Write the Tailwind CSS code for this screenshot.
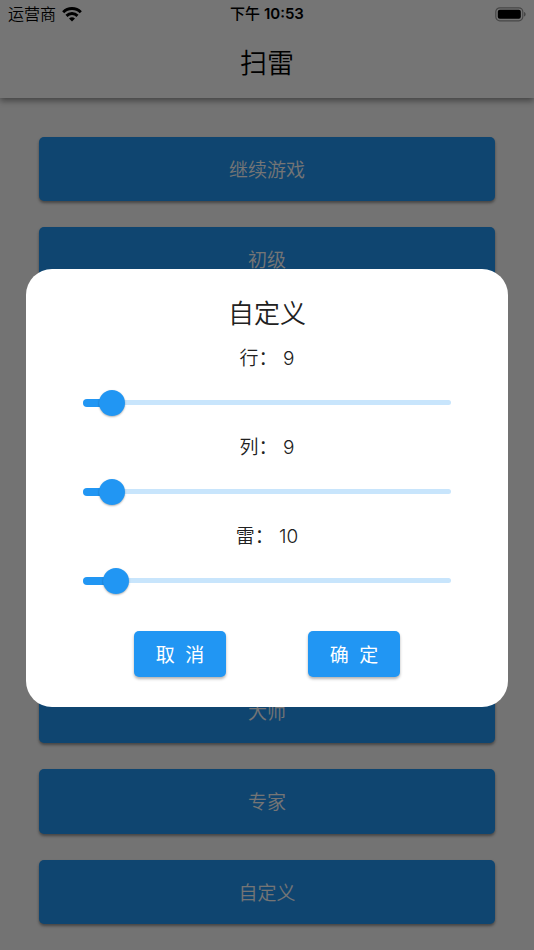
<!DOCTYPE html>
<html lang="zh-CN">
<head>
  <meta charset="UTF-8" />
  <meta name="viewport" content="width=device-width, initial-scale=1.0" />
  <title>扫雷</title>
  <script src="https://cdn.jsdelivr.net/npm/@tailwindcss/browser@4"></script>
  <style>
    body {
      font-family: Inter, "Noto Sans CJK SC", sans-serif;
    }
    input[type="range"]::-webkit-slider-thumb {
      appearance: none;
      width: 26px;
      height: 26px;
      border-radius: 50%;
      background: #2196f3;
      box-shadow: 0 1px 2px rgba(0, 0, 0, 0.3);
    }
  </style>
</head>
<body class="bg-[#fafafa] text-black">
  <div class="flex flex-col h-screen">

    <!-- Header -->
    <header class="bg-white shadow-[0_3px_6px_rgba(0,0,0,0.4)]">
      <div class="grid grid-cols-3 items-center h-7 px-2 text-[15px]">
        <div class="flex items-center gap-1.5">
          <span class="text-base font-[350]">运营商</span>
          <svg class="w-5 h-[15px]" viewBox="0 0 20 15" fill="none" stroke="#000" stroke-width="3">
            <path d="M1.2 5.2a12.6 12.6 0 0 1 17.6 0" />
            <path d="M4.5 8.8a7.9 7.9 0 0 1 11 0" />
            <path d="M10 14.6 7 11.6a4.3 4.3 0 0 1 6 0z" fill="#000" stroke="none" />
          </svg>
        </div>
        <div class="text-center font-semibold"><span class="font-medium">下午</span> 10:53</div>
        <svg class="w-[31px] h-[15px] justify-self-end" viewBox="0 0 31 15">
          <rect x="0.8" y="0.8" width="27" height="13" rx="4" fill="none" stroke="#000" stroke-opacity="0.4" stroke-width="1.2" />
          <rect x="2.8" y="2.8" width="23" height="9" rx="2" fill="#000" />
          <path d="M29.2 5v4.6c1.8-.7 1.8-3.900 0-4.600z" fill="#000" fill-opacity="0.5" />
        </svg>
      </div>
      <h1 class="flex items-center justify-center h-[70px] pt-0.5 text-[27px] font-[350]">扫雷</h1>
    </header>

    <!-- Menu -->
    <main class="flex flex-1 flex-col gap-[26px] px-[39px] pt-[39px] pb-[26px] text-[19px] font-[350] text-white">
      <button class="flex-1 pt-1 rounded-[5px] bg-[#2196f3] shadow-[0_2px_3px_rgba(0,0,0,0.4)]">继续游戏</button>
      <button class="flex-1 pt-1 rounded-[5px] bg-[#2196f3] shadow-[0_2px_3px_rgba(0,0,0,0.4)]">初级</button>
      <button class="flex-1 pt-1 rounded-[5px] bg-[#2196f3] shadow-[0_2px_3px_rgba(0,0,0,0.4)]"></button>
      <button class="flex-1 pt-1 rounded-[5px] bg-[#2196f3] shadow-[0_2px_3px_rgba(0,0,0,0.4)]"></button>
      <button class="flex-1 pt-1 rounded-[5px] bg-[#2196f3] shadow-[0_2px_3px_rgba(0,0,0,0.4)]"></button>
      <button class="flex-1 pt-1 rounded-[5px] bg-[#2196f3] shadow-[0_2px_3px_rgba(0,0,0,0.4)]"></button>
      <button class="flex-1 pt-1 rounded-[5px] bg-[#2196f3] shadow-[0_2px_3px_rgba(0,0,0,0.4)]">大师</button>
      <button class="flex-1 pt-1 rounded-[5px] bg-[#2196f3] shadow-[0_2px_3px_rgba(0,0,0,0.4)]">专家</button>
      <button class="flex-1 pt-1 rounded-[5px] bg-[#2196f3] shadow-[0_2px_3px_rgba(0,0,0,0.4)]">自定义</button>
    </main>
  </div>

  <!-- Custom game dialog -->
  <div id="overlay" class="fixed inset-0 flex items-center bg-black/54 px-[26px] pt-[26px]">
    <form id="customForm" role="dialog" aria-labelledby="dialogTitle"
      class="w-full rounded-[26px] bg-white px-11 pt-[27px] pb-[30px] font-[350] text-[#212121]">
      <h2 id="dialogTitle" class="text-center text-[26px] leading-9 font-[350]">自定义</h2>

      <div class="pt-[11px]">
        <label for="rows" class="block pt-0.5 text-center text-[19px] leading-7">行： <output for="rows">9</output></label>
        <div class="grid items-center h-[59px]">
          <div class="col-start-1 row-start-1 mx-[13px] h-[5px] rounded-full bg-[#c8e5fc]"></div>
          <div class="col-start-1 row-start-1 mx-[13px]">
            <div class="bar h-2 rounded-full bg-[#2196f3]" style="width: 8%"></div>
          </div>
          <input type="range" id="rows" min="1" max="101" value="9"
            class="col-start-1 row-start-1 w-full h-[26px] appearance-none bg-transparent" />
        </div>
        <label for="cols" class="block pt-0.5 text-center text-[19px] leading-7">列： <output for="cols">9</output></label>
        <div class="grid items-center h-[59px]">
          <div class="col-start-1 row-start-1 mx-[13px] h-[5px] rounded-full bg-[#c8e5fc]"></div>
          <div class="col-start-1 row-start-1 mx-[13px]">
            <div class="bar h-2 rounded-full bg-[#2196f3]" style="width: 8%"></div>
          </div>
          <input type="range" id="cols" min="1" max="101" value="9"
            class="col-start-1 row-start-1 w-full h-[26px] appearance-none bg-transparent" />
        </div>
        <label for="mines" class="block pt-0.5 text-center text-[19px] leading-7">雷： <output for="mines">10</output></label>
        <div class="grid items-center h-[59px]">
          <div class="col-start-1 row-start-1 mx-[13px] h-[5px] rounded-full bg-[#c8e5fc]"></div>
          <div class="col-start-1 row-start-1 mx-[13px]">
            <div class="bar h-2 rounded-full bg-[#2196f3]" style="width: 9%"></div>
          </div>
          <input type="range" id="mines" min="1" max="101" value="10"
            class="col-start-1 row-start-1 w-full h-[26px] appearance-none bg-transparent" />
        </div>
      </div>

      <div class="flex justify-center gap-[82px] pt-[21px] text-[19px] font-normal text-white whitespace-pre">
        <button type="button" id="cancelBtn" class="w-[92px] h-[46px] pt-1 rounded-[5px] bg-[#2196f3] shadow-[0_2px_3px_rgba(0,0,0,0.3)]">取  消</button>
        <button type="submit" class="w-[92px] h-[46px] pt-1 rounded-[5px] bg-[#2196f3] shadow-[0_2px_3px_rgba(0,0,0,0.3)]">确  定</button>
      </div>
    </form>
  </div>

  <script>
    const overlay = document.getElementById('overlay');
    const form = document.getElementById('customForm');

    form.querySelectorAll('input[type="range"]').forEach(function (input) {
      const bar = input.parentElement.querySelector('.bar');
      const output = form.querySelector('output[for="' + input.id + '"]');
      input.addEventListener('input', function () {
        output.textContent = input.value;
        bar.style.width = ((input.value - input.min) / (input.max - input.min)) * 100 + '%';
      });
    });

    document.getElementById('cancelBtn').addEventListener('click', function () {
      overlay.remove();
    });

    form.addEventListener('submit', function (event) {
      event.preventDefault();
      overlay.remove();
    });
  </script>
</body>
</html>
